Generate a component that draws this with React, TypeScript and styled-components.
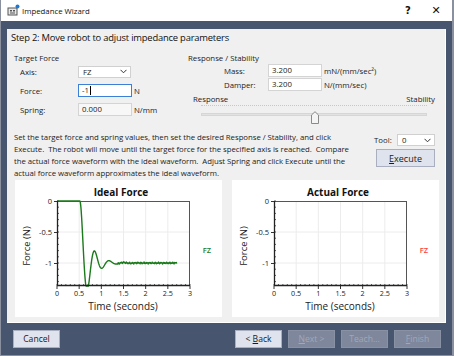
import React from 'react';
import styled, { createGlobalStyle } from 'styled-components';

const GlobalStyle = createGlobalStyle`
  html, body { margin: 0; padding: 0; background: #ffffff; }
  body {
    width: 454px; height: 356px; overflow: hidden;
    font-family: "Open Sans", "Noto Sans", sans-serif;
    color: #1a1a1a;
  }
  * { box-sizing: border-box; }
`;

const Window = styled.div`
  width: 454px;
  height: 356px;
  background: #48556f;
  border-left: 1px solid #8a909e;
  border-right: 2px solid #8a909e;
  border-bottom: 1px solid #8a909e;
  display: flex;
  flex-direction: column;
`;

const TitleBar = styled.div`
  height: 21px;
  background: #ffffff;
  display: flex;
  align-items: center;
  padding: 0 0 0 6px;
  font-size: 7.8px;
  color: #111;
`;

const TitleText = styled.span`
  margin-left: 2px;
  flex: 1;
`;

const TitleButton = styled.span<{ $w: number; $size: number; $weight: number }>`
  width: ${p => p.$w}px;
  text-align: center;
  font-size: ${p => p.$size}px;
  font-weight: ${p => p.$weight};
  font-family: "DejaVu Sans", sans-serif;
`;

const Body = styled.div`
  padding: 8px 6px 0 6px;
`;

const Panel = styled.div`
  background: #f0f0f0;
  height: 294px;
  padding: 0 6px 0 7px;
  border-right: 1px solid #ffffff;
  border-bottom: 1px solid #ffffff;
  display: flex;
  flex-direction: column;
`;

const Heading = styled.div`
  font-size: 9.4px;
  letter-spacing: -0.2px;
  line-height: 15px;
  padding-top: 1px;
  margin-left: -3px;
  color: #111;
`;

const TopSection = styled.div`
  display: flex;
  margin-top: 8px;
`;

const LeftGroup = styled.div`
  width: 174px;
`;

const RightGroup = styled.div`
  flex: 1;
  margin-right: 4px;
`;

const GroupTitle = styled.div`
  font-size: 7.8px;
  line-height: 11px;
  color: #222;
`;

const FormGrid = styled.div<{ $indent: number; $label: number; $gap: number }>`
  display: grid;
  grid-template-columns: ${p => p.$label}px 54px auto;
  grid-auto-rows: 13px;
  row-gap: ${p => p.$gap}px;
  padding-left: ${p => p.$indent}px;
  margin-top: ${p => (p.$gap > 2 ? 1 : 0)}px;
  align-items: center;
  font-size: 7.8px;
  color: #222;
`;

const Unit = styled.span`
  padding-left: 2px;
  white-space: nowrap;
`;

const TextBox = styled.div<{ $focused?: boolean; $muted?: boolean }>`
  height: 13px;
  border: 1px solid ${p => (p.$focused ? '#3c7fd6' : '#d4d4d4')};
  background: ${p => (p.$muted ? '#f7f7f7' : '#ffffff')};
  padding-left: 3px;
  line-height: 11px;
  font-size: 7.8px;
  display: flex;
  align-items: center;
`;

const Caret = styled.span`
  width: 1px;
  height: 9px;
  background: #000;
  margin-left: 1px;
`;

const Select = styled.div<{ $w: number }>`
  width: ${p => p.$w}px;
  height: 12px;
  border: 1px solid #d0d0d0;
  background: #ffffff;
  display: flex;
  align-items: center;
  justify-content: space-between;
  padding: 0 3px 0 4px;
  font-size: 7.8px;
`;

const Chevron = () => (
  <svg width="7" height="5" viewBox="0 0 7 5">
    <path d="M0.5 0.8 L3.5 3.8 L6.5 0.8" fill="none" stroke="#333" strokeWidth="1" />
  </svg>
);

const SliderLabels = styled.div`
  display: flex;
  justify-content: space-between;
  margin-top: 3px;
  padding-left: 5px;
  font-size: 7.8px;
  line-height: 11px;
  color: #222;
`;

const Slider = styled.div`
  position: relative;
  margin: 0 8px 0 13px;
  height: 15px;
  border-top: 1px dotted #c8c8c8;
`;

const Track = styled.div`
  position: absolute;
  left: 0; right: 0; top: 7px;
  height: 3px;
  background: #e2e2e2;
  border: 1px solid #d6d6d6;
`;

const Thumb = styled.div`
  position: absolute;
  left: 110px;
  top: 1px;
  width: 8px;
  height: 13px;
`;

const InfoRow = styled.div`
  display: grid;
  grid-template-columns: 360px 61px;
  margin-top: 11px;
`;

const Description = styled.div`
  font-size: 7.8px;
  letter-spacing: -0.04px;
  line-height: 12px;
  color: #222;
  white-space: nowrap;
  overflow: hidden;
`;

const ToolGrid = styled.div`
  display: grid;
  grid-template-columns: 23px 38px;
  grid-template-rows: 12px 18px;
  row-gap: 3px;
  padding-top: 3px;
  align-items: center;
  align-content: start;
  font-size: 7.8px;
  color: #222;
`;

const Button = styled.button<{ $disabled?: boolean; $w?: number; $size?: number }>`
  width: ${p => p.$w ?? 47}px;
  height: 18px;
  padding: 0;
  font-family: inherit;
  font-size: ${p => p.$size ?? 8.6}px;
  border: 1px solid ${p => (p.$disabled ? '#8991a5' : '#a9afbf')};
  background: ${p => (p.$disabled ? '#7e879c' : '#dfe3ee')};
  color: ${p => (p.$disabled ? '#a0a8ba' : '#1a1a1a')};
  display: flex;
  align-items: center;
  justify-content: center;
  white-space: pre;
  u { text-decoration-thickness: 1px; text-underline-offset: 1px; }
`;

const ExecuteButton = styled(Button)`
  grid-column: 1 / -1;
  justify-self: end;
`;

const ChartsRow = styled.div`
  display: flex;
  gap: 10px;
  margin-top: 1px;
  padding-left: 1px;
`;

const ChartCard = styled.div`
  width: 207px;
  height: 137px;
  background: #ffffff;
`;

const Footer = styled.div`
  display: flex;
  padding: 7px 11px 0 12px;
  gap: 6px;
`;

const Spacer = styled.div`
  flex: 1;
`;

// ---- chart drawing ----
const X0 = 42, X1 = 175, Y0 = 21, Y1 = 106;
const sx = (t: number) => X0 + (t / 3) * (X1 - X0);
const sy = (v: number) => Y0 - v * 62;
const VMIN = -(Y1 - Y0) / 62;

function ideal(t: number) {
  const tau = t - 0.515;
  if (tau <= 0) return 0;
  const s = 5, w = 19.2;
  let v = -(1 - Math.exp(-s * tau) * (Math.cos(w * tau) + (s / w) * Math.sin(w * tau)));
  if (t > 1.35) v += 0.007 * Math.sin(t * 97) + 0.006 * Math.sin(t * 173 + 1) + 0.004 * Math.sin(t * 311);
  return Math.max(v, VMIN);
}

function idealPath() {
  const pts: string[] = [];
  for (let i = 0; i <= 540; i++) {
    const t = (i / 540) * 2.7;
    pts.push(`${sx(t).toFixed(2)},${sy(ideal(t)).toFixed(2)}`);
  }
  return 'M' + pts.join(' L');
}

const Chart: React.FC<{ title: string; color: string; curve?: boolean }> = ({ title, color, curve }) => {
  const minorY: number[] = [];
  for (let v = 0; v >= VMIN - 0.001; v -= 0.1) minorY.push(v);
  const minorX: number[] = [];
  for (let i = 0; i <= 30; i++) minorX.push(i / 10);
  const majorX = [0, 0.5, 1, 1.5, 2, 2.5, 3];
  const labX = ['0', '0.5', '1', '1.5', '2', '2.5', '3'];
  return (
    <ChartCard>
      <svg width="207" height="137" viewBox="0 0 207 137" fontFamily='"Open Sans", "Noto Sans", sans-serif'>
        <text x="106" y="16" textAnchor="middle" fontSize="10" fontWeight="700" fill="#111">{title}</text>
        {[0.5, 1, 1.5, 2, 2.5].map(t => (
          <line key={'gx' + t} x1={sx(t)} x2={sx(t)} y1={Y0} y2={Y1} stroke="#ececec" strokeWidth="1" />
        ))}
        {[-0.5, -1].map(v => (
          <line key={'gy' + v} x1={X0} x2={X1} y1={sy(v)} y2={sy(v)} stroke="#ececec" strokeWidth="1" />
        ))}
        <line x1={X0} x2={X1} y1={Y0 + 0.5} y2={Y0 + 0.5} stroke="#555" strokeWidth="1" />
        <line x1={X1 - 0.5} x2={X1 - 0.5} y1={Y0} y2={Y1} stroke="#555" strokeWidth="1" />
        {minorY.map((v, i) => (
          <line key={'my' + i} x1={X0} x2={X0 + 2} y1={sy(v)} y2={sy(v)} stroke="#333" strokeWidth="0.8" />
        ))}
        {[0, -0.5, -1].map(v => (
          <line key={'My' + v} x1={X0 - 3} x2={X0} y1={sy(v) + 0.5} y2={sy(v) + 0.5} stroke="#333" strokeWidth="1" />
        ))}
        {minorX.map((t, i) => (
          <line key={'mx' + i} x1={sx(t)} x2={sx(t)} y1={Y1} y2={Y1 - 2} stroke="#333" strokeWidth="0.8" />
        ))}
        {majorX.map(t => (
          <line key={'Mx' + t} x1={sx(t)} x2={sx(t)} y1={Y1} y2={Y1 + 3} stroke="#333" strokeWidth="1" />
        ))}
        {curve && <path d={idealPath()} fill="none" stroke={color} strokeWidth="1.4" strokeLinejoin="round" />}
        <line x1={X0 + 0.5} x2={X0 + 0.5} y1={Y0} y2={Y1} stroke="#222" strokeWidth="1.3" />
        <line x1={X0} x2={X1} y1={Y1 - 0.5} y2={Y1 - 0.5} stroke="#222" strokeWidth="1.3" />
        {[['0', 0], ['-0.5', -0.5], ['-1', -1]].map(([l, v]) => (
          <text key={'ly' + l} x={X0 - 5} y={sy(v as number) + 3} textAnchor="end" fontSize="7.5" fill="#222">{l}</text>
        ))}
        {majorX.map((t, i) => (
          <text key={'lx' + t} x={sx(t)} y={Y1 + 9.5} textAnchor="middle" fontSize="7.2" fill="#222">{labX[i]}</text>
        ))}
        <text x="108" y="129.5" textAnchor="middle" fontSize="10" fill="#222">Time (seconds)</text>
        <text x="0" y="0" transform="translate(15 66) rotate(-90)" textAnchor="middle" fontSize="9.5" fill="#222">Force (N)</text>
        <text x="192" y="73" textAnchor="middle" fontSize="7.5" fontWeight="600" fill={color}>FZ</text>
      </svg>
    </ChartCard>
  );
};

const AppIcon = () => (
  <svg width="13" height="13" viewBox="0 0 13 13">
    <rect x="1" y="4" width="9" height="7" fill="#e8e8e8" stroke="#555" strokeWidth="1" />
    <rect x="3" y="6" width="2" height="1.5" fill="#555" />
    <rect x="6" y="6" width="2" height="1.5" fill="#555" />
    <line x1="3" y1="9" x2="8" y2="9" stroke="#555" strokeWidth="1" />
    <circle cx="10.5" cy="2.5" r="2" fill="#1e78d6" />
  </svg>
);

export default function App() {
  return (
    <>
      <GlobalStyle />
      <Window>
        <TitleBar>
          <AppIcon />
          <TitleText>Impedance Wizard</TitleText>
          <TitleButton $w={24} $size={10} $weight={700}>?</TitleButton>
          <TitleButton $w={32} $size={11} $weight={400}>✕</TitleButton>
        </TitleBar>
        <Body>
          <Panel>
            <Heading>Step 2: Move robot to adjust impedance parameters</Heading>
            <TopSection>
              <LeftGroup>
                <GroupTitle>Target Force</GroupTitle>
                <FormGrid $indent={6} $label={58} $gap={6}>
                  <span>Axis:</span>
                  <Select $w={53}><span>FZ</span><Chevron /></Select>
                  <span />
                  <span>Force:</span>
                  <TextBox $focused>-1<Caret /></TextBox>
                  <Unit>N</Unit>
                  <span>Spring:</span>
                  <TextBox $muted>0.000</TextBox>
                  <Unit>N/mm</Unit>
                </FormGrid>
              </LeftGroup>
              <RightGroup>
                <GroupTitle>Response / Stability</GroupTitle>
                <FormGrid $indent={36} $label={44} $gap={1}>
                  <span>Mass:</span>
                  <TextBox>3.200</TextBox>
                  <Unit>mN/(mm/sec²)</Unit>
                  <span>Damper:</span>
                  <TextBox>3.200</TextBox>
                  <Unit>N/(mm/sec)</Unit>
                </FormGrid>
                <SliderLabels>
                  <span>Response</span>
                  <span>Stability</span>
                </SliderLabels>
                <Slider>
                  <Track />
                  <Thumb>
                    <svg width="8" height="13" viewBox="0 0 8 13">
                      <path d="M0.5 12.5 L0.5 4 L4 0.7 L7.5 4 L7.5 12.5 Z" fill="#f4f4f4" stroke="#8a8a8a" strokeWidth="1" />
                    </svg>
                  </Thumb>
                </Slider>
              </RightGroup>
            </TopSection>
            <InfoRow>
              <Description>
                Set the target force and spring values, then set the desired Response / Stability, and click<br />
                Execute.&nbsp; The robot will move until the target force for the specified axis is reached.&nbsp; Compare<br />
                the actual force waveform with the ideal waveform.&nbsp; Adjust Spring and click Execute until the<br />
                actual force waveform approximates the ideal waveform.
              </Description>
              <ToolGrid>
                <span>Tool:</span>
                <Select $w={38}><span>0</span><Chevron /></Select>
                <ExecuteButton $w={59} $size={9}><span><u>E</u>xecute</span></ExecuteButton>
              </ToolGrid>
            </InfoRow>
            <ChartsRow>
              <Chart title="Ideal Force" color="#1b7a1b" curve />
              <Chart title="Actual Force" color="#ff3b3b" />
            </ChartsRow>
          </Panel>
        </Body>
        <Footer>
          <Button>Cancel</Button>
          <Spacer />
          <Button><span>&lt; <u>B</u>ack</span></Button>
          <Button $disabled><span><u>N</u>ext &gt;</span></Button>
          <Button $disabled>Teach...</Button>
          <Button $disabled><span><u>F</u>inish</span></Button>
        </Footer>
      </Window>
    </>
  );
}
